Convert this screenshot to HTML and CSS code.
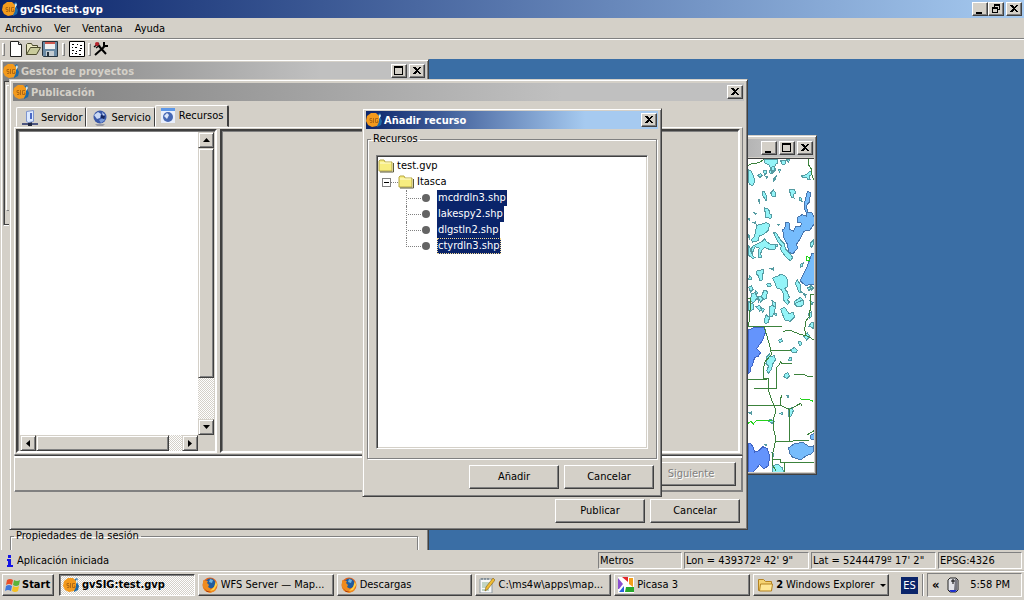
FILE: index.html
```html
<!DOCTYPE html>
<html lang="es">
<head>
<meta charset="utf-8">
<title>gvSIG:test.gvp</title>
<link rel="stylesheet" href="styles.css">
</head>
<body>
<svg class="defs" aria-hidden="true">
  <symbol id="gv" viewBox="0 0 16 16">
    <path d="M11 3l3-2 1 2-1 2 2 4-1 4-4 2z" fill="#1c69a8"/>
    <path d="M12 5l2-3 1 2-2 3z" fill="#d8ecf2"/>
    <path d="M5 1h5l3 3v6l-2 4-5 1-4-2-2-4 1-5z" fill="#f39a1c"/>
    <path d="M6 6.500H4v2h2v2H4M7.500 6v5M12 6.500H9.500v4H12V9h-1" fill="none" stroke="#b06a14"/>
  </symbol>
  <symbol id="min" viewBox="0 0 14 12"><path d="M3 9h6v2H3z"/></symbol>
  <symbol id="max" viewBox="0 0 14 12"><path fill-rule="evenodd" d="M2 1h9v9H2zM3 3v6h7V3z"/></symbol>
  <symbol id="restore" viewBox="0 0 14 12"><path fill-rule="evenodd" d="M5 1h6v6H9v3H3V4h2zM6 3v1h3v2h1V3zM4 6v3h4V6z"/></symbol>
  <symbol id="close" viewBox="0 0 14 12"><path d="M3 2h2l2 2 2-2h2L8 5.500l3 3.500H9L7 7 5 9H3l3-3.500z"/></symbol>
  <symbol id="folder" viewBox="0 0 16 14">
    <path d="M1 3V2l1-1h4l1 2h7v9H1z" fill="#f7ed80" stroke="#b5a642"/><path d="M2 4h11" stroke="#fffcd5"/><path d="M15.500 4v9H2" fill="none" stroke="#5c5a3a"/>
  </symbol>
  <symbol id="firefox" viewBox="0 0 16 16">
    <circle cx="8" cy="8" r="7.500" fill="#e2641b"/><circle cx="8.500" cy="6.500" r="5" fill="#205c9e"/><path d="M8 2l3 1-1 3-3-1z" fill="#6fb6df"/>
    <path d="M1 3l2 1 3 0-1 2 2 2-1 2 3 2 4-2 1-5 1 4-2 5-5 2-5-2-2-4z" fill="#f08b1d"/><path d="M14 4l1 4-3 5-4 1 4-4z" fill="#ffd34a"/><path d="M2 11l3 3 4 1-4 0z" fill="#9e2d10"/>
  </symbol>
  <symbol id="globe" viewBox="0 0 16 16">
    <path d="M3 14l10 0-2 2H5z" fill="#9b9ba3"/><circle cx="8" cy="7" r="6.500" fill="#3a58a8"/><path d="M2 5l4-3 3 2-1 4-3 1zM10 2l3 3-2 1z" fill="#c9d8f4"/><path d="M7 10l4-2 2 2-4 3z" fill="#7899d8"/><path d="M9 5l4 1-1 3-3-1z" fill="#16265e"/>
  </symbol>
</svg>

<header class="titlebar app-title">
  <svg class="ico"><use href="#gv"/></svg><h1>gvSIG:test.gvp</h1>
  <div class="ctl"><button aria-label="Minimizar"><svg><use href="#min"/></svg></button><button aria-label="Restaurar"><svg><use href="#restore"/></svg></button><button class="gap" aria-label="Cerrar"><svg><use href="#close"/></svg></button></div>
</header>
<nav class="menubar"><button>Archivo</button><button>Ver</button><button>Ventana</button><button>Ayuda</button></nav>
<div class="toolbar">
  <i class="grip"></i>
  <button aria-label="Nuevo"><svg viewBox="0 0 16 16"><path d="M2.500.5h8l3 3v12h-11z" fill="#fff" stroke="#222"/><path d="M10.500.5v3h3" fill="#ddd" stroke="#222"/></svg></button>
  <button aria-label="Abrir"><svg viewBox="0 0 16 16"><path d="M1.500 13.500v-10l1-1h4l1 2h5v2" fill="#e8e6c0" stroke="#4a4a2c"/><path d="M1.500 13.500l4-7h10l-4 7z" fill="#c9cb9c" stroke="#4a4a2c"/></svg></button>
  <button aria-label="Guardar"><svg viewBox="0 0 16 16"><path d="M.5.5h15v15h-14l-1-1z" fill="#6a8aa5" stroke="#26323c"/><path d="M3 1h10v7H3z" fill="#f1f1f1"/><path d="M3 1h10v2H3z" fill="#d05a50"/><path d="M4 10h8v5H4z" fill="#c4ccd2"/><path d="M5 11h2v4H5z" fill="#26323c"/></svg></button>
  <i class="grip"></i>
  <button aria-label="Consola"><svg viewBox="0 0 16 16"><path d="M.5.5h15v15H.5z" fill="#fff" stroke="#000"/><path d="M3 3.500h3m2 0h1m2 1h2M3 6.500h1m2 0h3m2 1h2M3 9.500h2m2 1h1m2-1h3M3 12.500h1m2 0h2m2 1h3" stroke="#000" stroke-dasharray="2 1"/></svg></button>
  <i class="grip last"></i>
  <button aria-label="Preferencias"><svg viewBox="0 0 16 16"><path d="M5 4l8 9M2 14l9-8" stroke="#000" stroke-width="2"/><path d="M11 1v4h4M10 6l2-1" stroke="#000" stroke-width="2" fill="none"/><path d="M1 6l5-4M3 7l4-3" stroke="#111" stroke-width="1.500"/><circle cx="4" cy="3" r="2" fill="#b8222c"/></svg></button>
</div>

<main class="desktop">
  <section class="win gestor">
    <div class="titlebar off"><svg class="ico"><use href="#gv"/></svg><h2>Gestor de proyectos</h2>
      <div class="ctl wide"><button aria-label="Maximizar"><svg><use href="#max"/></svg></button><button aria-label="Cerrar"><svg><use href="#close"/></svg></button></div></div>
    <div class="gestor-list"><div></div></div>
    <fieldset class="group session"><legend>Propiedades de la sesión</legend></fieldset>
  </section>

  <section class="win mapwin">
    <div class="titlebar off end"><div class="ctl wide"><button aria-label="Minimizar"><svg><use href="#min"/></svg></button><button aria-label="Maximizar"><svg><use href="#max"/></svg></button><button aria-label="Cerrar"><svg><use href="#close"/></svg></button></div></div>
    <div class="map">
      <svg viewBox="24 87 198 939" shape-rendering="crispEdges" role="img" aria-label="Mapa">
        <g fill="#94f4f8" stroke="#559ba2" stroke-width="3">
          <path d="M24 118l10 6 6 12 4 18-6 12-8-2-6-8zM74 87l38 1 2 10-8 6-4 16-8 4-6-18-14-8zM94 112l10-4 2 12-8 8zM122 92l16 0-4 12-8-2zM138 90l10-2-2 8zM70 122l8-2 2 8-6 8zM88 122l6-2v10l-6-2zM54 136l8-6 4 6-6 6zM76 138l6 2-2 6zM100 148l8-8-2 8-6 6zM116 118l6 2-4 6zM184 138l16-4 6-8 8-4 2 12-8 4 2 10-6 2-4-8-12 0z"/>
          <path d="M66 184l8 2 6 14-2 12-6-10-4-6zM92 188l8-8 8 10-2 8-10 0zM148 180l16-2 2 12-6 4 2 10-8-2zM178 202l6 2 2 10-6-2zM54 208l6 2-2 8zM74 234l12 4 4 14 6 4-4 10-8-4-6 2-2-10zM42 248l8 2-4 4zM24 264l6 4-2 4zM40 278l6-2 2 6zM112 282l6 0-2 4z"/>
          <path d="M50 286l30-8 8 4-2 18-16 14-12 4-4 14-16 4-4-6 10-12zM24 314l6 4-2 8zM66 334l8-8 6 10 14 8 12 0 2 12-8 4-12-2-14-6-8 8-4 10 2 12-8 0-2-10 4-18-12-4-6 12-4 10-4-10 6-14 14-6zM100 306l10 4 10 18 12 12 4 16 14 14 8 12-6 10-10-6-10-12-12-18 4-8-10-12-8-16zM24 344l10 16 6 20 6 2-8 4-14-12zM210 340l10-10 2 12-8 10-4-2zM92 416l8-2v6zM106 342l6 0 2 8-6-2z"/>
          <path d="M28 438l8 6-4 6-6-2zM48 424l22-6 0 12-4 4v16l-8 2-2-14-8-6zM98 444l16-6 10-6 14 8 6 14-2 16-8 6 8 10 6 16-6 8 6 6-6 8-10-12-2-20-6-14-14-4-4-12zM80 462l10-2 4 8-10 2zM172 450l8 12 0 12 4 14-8-2-4-14-6-12zM182 402l8-4-2 10-6 4zM202 474l6-4 4 8-6 4zM72 480l10 4-2 20-8 4-8-8zM26 472l8-4 6 10-8 8zM46 482l6 4-2 10zM36 490l10-2 6 16-12 14-10-4zM164 514l18-12 8 10-6 14-12 4-10-8zM190 490l8 4-2 6zM54 500l10-2 6 10-8 8zM212 466l8 8-6 6zM210 512l10 6-4 6z"/>
          <path d="M24 514l16 8 2 14-12 8-6-6zM48 530l10-4 8 10-6 8zM62 534l12 4-6 8zM88 530l10-4 8 6-4 16-6 12-8-2 2-12zM96 512l10 6 2 12-8-2zM122 538l12-6 12 18 14-2 4 12-14 14-16-4zM166 520l22-10 4 12-10 8-12-2zM78 554l10 8-2 14-10 6-4-10zM206 550l8-4 2 12-8 8zM206 590l8-12 8-2-2 20-8-6zM192 620l10-12 8 12-10 10zM100 552l8-2 0 6zM52 506l6 4-2 6z"/>
          <path d="M116 630l8-4 4 8-8 4zM174 636l8-2 4 8-6 6zM152 660l12-8 8 10-4 6-12-2zM148 684l6-2v8l-8 0zM80 680l8-8 4 8 12-4 2 14-8 12-4 16-8 12-6-8 6-14-8-8zM134 732l10-4 4 10-8 8-8-6zM146 838l10-6 4 10-6 16-10 2zM118 850l10-2-2 6zM24 848l10-2 0 6zM140 796l6 2-2 6zM82 872l10-4 10 6-6 6zM74 944l6-2v6zM96 968l6 2-2 8zM98 1008l14-6 16 12 2 12H98z"/>
        </g>
        <g fill="#76bcfc" stroke="#4775ad" stroke-width="3">
          <path d="M202 184l10 4-4 28-8 10 2 20 14 2 6 12v22l-12 18-18 4-10 20-12 18 2 14-14 16-12-6-4-24-10-18-4-24 6-4 4-20 12 4-2 18 12 6 8-16 14 0 4-8-14-4 0-14 14-8 12 4 0-12-6-12 2-16z"/>
          <path d="M216 370l6 2v90l-14 0-10 6-18-16 10-20 12-24zM210 916l12-6v20l-12-4zM146 954l18-14 26-2 18 12 12-2 2 14-8 10-14 4-18 14-24-8-8-10z"/>
        </g>
        <g fill="#6494fc" stroke="#4064c4" stroke-width="3">
          <path d="M24 600l16-6 32-2 6 10-10 28-18 26 12 12-8 12-10 2-8 26-6 6v12l-6 4zM24 940l8 0 8 12 4 14 12-4 12-12 14 6 8 24-6 28-12 8-14-12-8 12-14 12h-12z"/>
        </g>
        <g fill="none" stroke="#3c823c" stroke-width="3">
          <path d="M24 106l12-5 22-3 14-11M206 87v18l8 12 2 18 6 16M222 494h-12v48M24 504h6v36l-4 50h100M72 590l8 24 12 44 2 16-18 20-6 20v32h14v32M92 660l60 2M130 604l18-4 30 12 24 6 20 12M198 618l-4-20 4-26 10-12 2-20M24 748h58M42 775h66v-62l10-8 4-10 4 6h30M162 732l30 2 14 6h14M84 776l12 36 12 28-8 30 0 24 6 26 0 16-8 34v36l10 16M24 826h96l10 4 18 8 12-6 22-12 4 8M122 825v-20l4-10M148 838v95M106 933h54l12-2h36M202 914l20-12M98 988l22 0v10l102-1M133 998v28"/>
          <path d="M24 880l10-6 6 10 4-8 10-6 42 0M180 806l12 4 14-2 14 6M200 380v12h8v-10z" stroke="#24d21c"/>
        </g>
      </svg>
    </div>
  </section>

  <section class="win pub">
    <div class="titlebar off"><svg class="ico"><use href="#gv"/></svg><h2>Publicación</h2>
      <div class="ctl"><button aria-label="Cerrar"><svg><use href="#close"/></svg></button></div></div>
    <div class="tabs" role="tablist">
      <button role="tab"><svg viewBox="0 0 16 16"><path d="M0 14h16" stroke="#4d5680" stroke-width="2"/><path d="M6 12h4v4H6z" fill="#20263e"/><path d="M4.500 1.500l7-1v11l-5 1-2-1z" fill="#dce9ff" stroke="#7d94cf"/><path d="M9 3v6" stroke="#4b68c4" stroke-width="2"/></svg>Servidor</button>
      <button role="tab"><svg><use href="#globe"/></svg>Servicio</button>
      <button role="tab" class="on" aria-selected="true"><svg viewBox="0 0 16 16"><path d="M1 0h14v15H1z" fill="#e9effc"/><path d="M1 0h14v3H1z" fill="#5d97e8"/><circle cx="8" cy="9" r="5" fill="#4668b4"/><path d="M4 8l3-3 2 2-2 4z" fill="#dbe6fa"/></svg>Recursos</button>
    </div>
    <div class="split">
      <div class="pane list">
        <div class="white"></div>
        <div class="sb v"><button aria-label="Subir"><svg viewBox="0 0 7 4"><path d="M0 4h7L3.500 0z"/></svg></button><i class="thumb"></i><i class="track"></i><button aria-label="Bajar"><svg viewBox="0 0 7 4"><path d="M0 0h7L3.500 4z"/></svg></button></div>
        <div class="sb h"><button aria-label="Izquierda"><svg class="side" viewBox="0 0 4 7"><path d="M4 0v7L0 3.500z"/></svg></button><i class="thumb"></i><i class="track"></i><button aria-label="Derecha"><svg class="side" viewBox="0 0 4 7"><path d="M0 0v7l4-3.500z"/></svg></button></div>
      </div>
      <div class="pane detail"></div>
    </div>
    <div class="nav"><button class="btn" disabled>Siguiente</button></div>
    <div class="actions"><button class="btn">Publicar</button><button class="btn">Cancelar</button></div>
  </section>

  <section class="win dialog" role="dialog" aria-label="Añadir recurso">
    <div class="titlebar"><svg class="ico"><use href="#gv"/></svg><h2>Añadir recurso</h2>
      <div class="ctl"><button aria-label="Cerrar"><svg><use href="#close"/></svg></button></div></div>
    <fieldset class="group"><legend>Recursos</legend>
      <ul class="tree" role="tree">
        <li><svg class="fold"><use href="#folder"/></svg>test.gvp</li>
        <li class="l1"><button class="toggle" aria-label="Contraer"></button><i class="dash"></i><svg class="fold"><use href="#folder"/></svg>Itasca</li>
        <li class="l2"><i class="twig"></i><i class="dot"></i><span>mcdrdln3.shp</span></li>
        <li class="l2"><i class="twig"></i><i class="dot"></i><span>lakespy2.shp</span></li>
        <li class="l2"><i class="twig"></i><i class="dot"></i><span>dlgstln2.shp</span></li>
        <li class="l2 last"><i class="twig"></i><i class="dot"></i><span class="focus">ctyrdln3.shp</span></li>
      </ul>
    </fieldset>
    <div class="actions"><button class="btn">Añadir</button><button class="btn">Cancelar</button></div>
  </section>
</main>

<div class="status">
  <svg viewBox="0 0 6 12"><path d="M1 0h3v3H1zM0 4h4v6h2v2H0v-2h1V6H0z" fill="#1414e6"/></svg>
  <p>Aplicación iniciada</p>
  <output>Metros</output><output class="w">Lon = 439372º 42' 9"</output><output class="w">Lat = 5244479º 17' 2"</output><output>EPSG:4326</output>
</div>
<footer class="taskbar">
  <button class="start"><svg viewBox="0 0 16 16"><path d="M2 3q3-2 6 0L7 8Q4 6 1 8z" fill="#e8502a"/><path d="M9 3q3 2 6 0l-1 5q-3 2-6 0z" fill="#5cb338"/><path d="M1 9q3-2 6 0l-1 5q-3-2-6 0z" fill="#3f78dc"/><path d="M8 9q3 2 6 0l-1 5q-3 2-6 0z" fill="#f5c020"/></svg>Start</button>
  <div class="tasks">
    <button class="active"><svg><use href="#gv"/></svg><span>gvSIG:test.gvp</span></button>
    <button><svg><use href="#firefox"/></svg><span>WFS Server — Map...</span></button>
    <button><svg><use href="#firefox"/></svg><span>Descargas</span></button>
    <button><svg viewBox="0 0 16 16"><path d="M1 2h12v14H1z" fill="#f7f8fa" stroke="#8e9aa0"/><path d="M3 1v2m3-2v2m3-2v2" stroke="#567"/><path d="M3 6h7M3 8h6M3 10h5M3 13h7" stroke="#8bb08d"/><path d="M14 1l2 2-7 9-3 2 1-4z" fill="#f0bc32" stroke="#7d5b17" stroke-width=".6"/></svg><span>C:\ms4w\apps\map...</span></button>
    <button><svg viewBox="0 0 16 16"><path d="M0 0h16v16H0z" fill="#fff"/><path d="M0 1l5 6-4 5-1 0z" fill="#8b4fd0"/><path d="M4 0h6v5z" fill="#e3262c"/><path d="M11 1h4v9l-4-3z" fill="#f3a01b"/><path d="M8 10h8v5H7z" fill="#28a82c"/><path d="M6 9v6H1z" fill="#2a62e0"/></svg><span>Picasa 3</span></button>
    <button class="grouped"><svg viewBox="0 0 16 16"><path d="M1.500 13.500v-11h5l2 2h6v9z" fill="#f5d372" stroke="#b58320"/><path d="M2.500 14l1-7h12l-1 7z" fill="#ffe796" stroke="#b58320"/></svg><b>2</b><span>Windows Explorer</span><i class="arrow"></i></button>
  </div>
  <span class="lang">ES</span><i class="sep"></i>
  <div class="tray"><b>«</b><svg viewBox="0 0 12 16"><path d="M3 1h6l2 2v10l-2 2H3l-2-2V3z" fill="#e4e4e8" stroke="#222"/><path d="M8 2h1l1 1v10H7z" fill="#77777f"/><path d="M2 13l2 2h4l2-2z" fill="#1d2fd0"/><path d="M6 2v5M4 4h4" stroke="#000"/></svg><time>5:58 PM</time></div>
</footer>
</body>
</html>
```
FILE: styles.css
```css
:root {
  --face: #d4d0c8;
  --dark: #404040;
  --mid: #808080;
  --navy: #0a246a;
}
* { box-sizing: border-box; }
body {
  margin: 0;
  height: 100vh;
  display: flex;
  flex-direction: column;
  overflow: hidden;
  background: var(--face);
  color: #000;
  font: 11px/14px "DejaVu Sans Condensed", "DejaVu Sans", sans-serif;
}
button { font: inherit; color: inherit; padding: 0; border: 0; background: none; }
i { font-style: normal; }
.defs { position: absolute; width: 0; height: 0; }

.titlebar {
  display: flex;
  align-items: center;
  height: 18px;
  flex: none;
  padding: 0 1px 0 0;
  color: #fff;
  background: linear-gradient(90deg, var(--navy), #a6caf0 75%);
}
.titlebar h1, .titlebar h2 { margin: 0; padding-top: 1px; font-size: 11px; font-weight: 700; flex: 1; }
.titlebar.off { color: var(--face); background: linear-gradient(90deg, #808080, #c0c0c0 75%); }
.titlebar.end { justify-content: flex-end; }
.app-title { padding: 0 2px; background: linear-gradient(90deg, var(--navy), #a6caf0); }
.ico { width: 16px; height: 16px; margin-right: 2px; }
.ctl { display: flex; }
.ctl.wide { gap: 2px; }
.ctl button {
  width: 16px;
  height: 14px;
  background: var(--face);
  border: 1px solid;
  border-color: #fff var(--dark) var(--dark) #fff;
  box-shadow: inset -1px -1px var(--mid);
}
.ctl .gap { margin-left: 2px; }
.ctl svg { display: block; width: 14px; height: 12px; shape-rendering: crispEdges; }

.menubar {
  display: flex;
  gap: 12px;
  height: 21px;
  flex: none;
  padding: 1px 5px 0;
  border-bottom: 1px solid var(--mid);
}
.toolbar {
  display: flex;
  align-items: center;
  gap: 1px;
  height: 20px;
  flex: none;
  padding: 0 0 1px 2px;
  border-top: 1px solid #fff;
}
.toolbar svg { display: block; width: 16px; height: 16px; }
.grip { width: 3px; height: 13px; border: 1px solid; border-color: #fff var(--mid) var(--mid) #fff; margin: 0 2px 0 0; }
.toolbar button + .grip { margin: 0 3px; }
.toolbar button + .grip.last { margin: 0 1px 0 2px; }

.desktop { position: relative; flex: 1; overflow: hidden; background: #3a6ea5; }
.win {
  position: absolute;
  display: flex;
  flex-direction: column;
  background: var(--face);
  border: 1px solid;
  border-color: var(--face) var(--dark) var(--dark) var(--face);
  box-shadow: inset 1px 1px #fff, inset -1px -1px var(--mid);
  padding: 3px;
}
.gestor { left: 0; top: 0; width: 429px; height: 523px; padding: 2px; }
.mapwin { left: 640px; top: 76px; width: 177px; height: 340px; padding: 3px 2px 2px; }
.pub { left: 9px; top: 20px; width: 739px; height: 451px; }
.dialog { left: 362px; top: 49px; width: 300px; height: 389px; padding: 2px 3px; }

.gestor-list { height: 146px; flex: none; border: 1px solid; border-color: var(--mid) #fff #fff var(--mid); box-shadow: inset 1px 1px var(--dark), inset 0 -1px var(--dark); padding: 4px 2px 14px; }
.gestor-list div { height: 100%; border: 1px solid; border-color: #fff var(--mid) var(--mid) #fff; }
.group { border: 1px solid var(--mid); box-shadow: 1px 1px #fff, inset 1px 1px #fff; margin: 0; padding: 0; min-width: 0; }
.group legend { padding: 0 2px; margin-left: 3px; }
.session { margin: auto 8px 0 7px; height: 50px; }

.map { border-top: 1px solid var(--dark); margin-top: 1px; flex: 1; display: flex; justify-content: flex-end; background: #fff; }
.map svg { width: 66px; height: 313px; }

.tabs { display: flex; align-items: flex-end; height: 26px; flex: none; padding: 4px 3px 0; }
.tabs button {
  display: flex;
  align-items: center;
  gap: 3px;
  height: 20px;
  padding: 1px 3px 0 5px;
  border: 1px solid;
  border-color: #fff var(--dark) transparent #fff;
  border-radius: 2px 2px 0 0;
}
.tabs .on { height: 22px; padding: 0 4px 1px; border-right-width: 2px; }
.tabs svg { width: 16px; height: 16px; }

.split { flex: 1; display: flex; gap: 3px; padding: 1px 2px 1px 1px; margin: 0 1px; border: 1px solid #fff; border-right-color: var(--mid); border-bottom: 1px solid var(--mid); }
.pane { border: 2px solid; border-color: var(--dark) #fff #fff var(--dark); box-shadow: inset 1px 1px var(--mid); }
.detail { flex: 1; }
.list { width: 201px; display: grid; grid-template: 1fr 16px / 1fr 16px; padding: 1px 1px 0 2px; }
.white { background: #fff; }
.sb { display: flex; }
.sb.v { flex-direction: column; }
.sb button, .thumb {
  width: 16px;
  height: 16px;
  flex: none;
  display: grid;
  place-items: center;
  background: var(--face);
  border: 1px solid;
  border-color: var(--face) var(--dark) var(--dark) var(--face);
  box-shadow: inset 1px 1px #fff, inset -1px -1px var(--mid);
}
.sb svg { width: 7px; height: 4px; }
.sb .side { width: 4px; height: 7px; }
.v .thumb { height: auto; flex: 230; }
.v .track { flex: 41; }
.h .thumb { width: auto; flex: 133; }
.h .track { flex: 13; }
.track, .active { background: repeating-conic-gradient(#fff 0 25%, var(--face) 0 50%) 0 0 / 2px 2px; }

.nav { display: flex; justify-content: flex-end; align-items: center; height: 37px; margin: 0 1px; padding: 0 6px; border: 1px solid; border-color: var(--dark) var(--mid) var(--mid) #fff; box-shadow: inset 0 2px #fff, inset -1px -1px var(--mid); }
.actions { display: flex; justify-content: flex-end; gap: 5px; padding: 7px 4px 3px; }
.btn {
  width: 90px;
  height: 24px;
  background: var(--face);
  border: 1px solid;
  border-color: #fff var(--dark) var(--dark) #fff;
  box-shadow: inset -1px -1px var(--mid);
}
.btn:disabled { color: var(--mid); text-shadow: 1px 1px #fff; }

.dialog .group { flex: 1; margin: 3px 1px 0 1px; display: flex; }
.tree { flex: 1; margin: 9px 8px 9px; padding: 2px 1px; list-style: none; background: #fff; border: 1px solid; border-color: var(--mid) #fff #fff var(--mid); box-shadow: inset 1px 1px var(--dark), inset -1px -1px var(--face); }
.tree li { display: flex; align-items: center; height: 16px; }
.fold { width: 16px; height: 14px; margin-right: 3px; }
.l1 { padding-left: 4px; }
.toggle { width: 9px; height: 9px; border: 1px solid var(--mid); background: linear-gradient(#000, #000) center / 5px 1px no-repeat #fff; }
.dash { width: 7px; border-top: 1px dotted var(--mid); }
.l2 { padding-left: 28px; }
.twig { align-self: stretch; width: 15px; border-left: 1px dotted var(--mid); background: repeating-linear-gradient(90deg, transparent 0 1px, var(--mid) 1px 2px) 0 8px / 100% 1px no-repeat; }
.last .twig { border-left: 0; background: repeating-linear-gradient(90deg, var(--mid) 0 1px, transparent 1px 2px) 0 8px / 100% 1px no-repeat, repeating-linear-gradient(var(--mid) 0 1px, transparent 1px 2px) 0 0 / 1px 8px no-repeat; }
.dot { width: 8px; height: 8px; margin: 0 7px 0 1px; border-radius: 50%; background: #646464; }
.l2 span { line-height: 16px; padding: 0 1px; color: #fff; background: var(--navy); }
.focus { outline: 1px dotted #f5db95; outline-offset: -1px; }
.dialog .actions { padding: 6px 4px 5px; }

.status { display: flex; align-items: center; gap: 2px; height: 21px; flex: none; padding: 1px 2px 0 7px; border-bottom: 1px solid #bbb7af; }
.status svg { width: 6px; height: 12px; margin-right: 2px; }
.status p { margin: 0; flex: 1; }
.status output { width: 84px; height: 17px; padding-left: 1px; line-height: 16px; white-space: nowrap; border: 1px solid; border-color: var(--mid) #fff #fff var(--mid); }
.status .w { width: 125px; }

.taskbar { display: flex; align-items: center; height: 29px; flex: none; padding: 0 2px 2px; border-top: 1px solid #fff; white-space: nowrap; }
.taskbar button {
  display: flex;
  align-items: center;
  gap: 3px;
  height: 22px;
  padding: 0 3px;
  border: 1px solid;
  border-color: #fff var(--dark) var(--dark) #fff;
  box-shadow: inset -1px -1px var(--mid);
}
.taskbar button svg { width: 16px; height: 16px; flex: none; }
.taskbar .start { width: 52px; padding: 0 2px; gap: 1px; font-weight: 700; margin-right: 5px; }
.tasks { flex: 1; display: grid; grid-template-columns: repeat(6, 1fr); gap: 3px; min-width: 0; }
.tasks button { min-width: 0; }
.tasks span { flex: 1; overflow: hidden; text-align: left; }
.taskbar .active { font-weight: 700; border-color: var(--dark) #fff #fff var(--dark); box-shadow: inset 1px 1px var(--mid); }
.taskbar .grouped { padding-right: 2px; }
.arrow { border: 3px solid transparent; border-top-color: #000; border-bottom: 0; }
.lang { margin: 0 4px 0 12px; width: 17px; line-height: 17px; text-align: center; color: #fff; background: var(--navy); }
.sep { width: 2px; height: 22px; border-left: 1px solid var(--mid); border-right: 1px solid #fff; margin-right: 3px; }
.tray { display: flex; align-items: center; gap: 7px; width: 95px; height: 24px; padding: 0 4px; border: 1px solid; border-color: var(--mid) #fff #fff var(--mid); }
.tray b { font-size: 13px; }
.tray svg { width: 12px; height: 16px; }
.tray time { margin-left: auto; padding-right: 7px; }
```
